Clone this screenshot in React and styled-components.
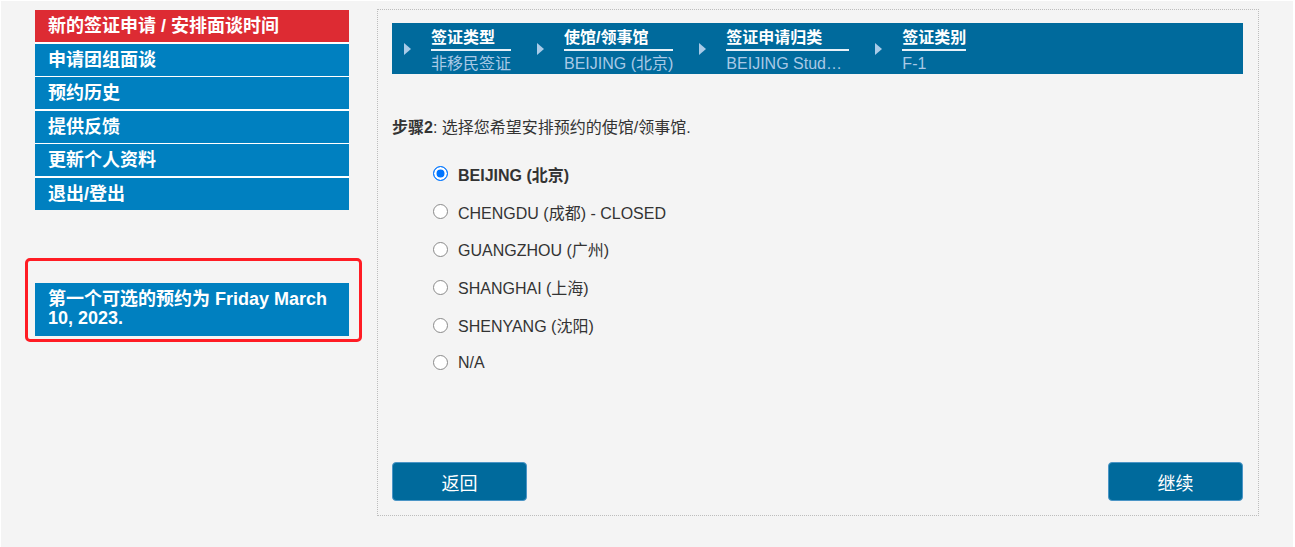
import React, { useState } from 'react';
import styled, { createGlobalStyle } from 'styled-components';

const GlobalStyle = createGlobalStyle`
  html, body {
    margin: 0;
    padding: 0;
    background: #ffffff;
  }
  body {
    font-family: "Liberation Sans", Arial, "Noto Sans CJK SC", sans-serif;
    color: #333333;
  }
  * { box-sizing: border-box; }
`;

const Page = styled.div`
  display: flex;
  align-items: flex-start;
  height: 546px;
  margin: 1px 2px 0 1px;
  padding: 8px 0 0 34px;
  background: #f4f4f4;
`;

const Sidebar = styled.div`
  width: 314px;
  flex-shrink: 0;
  padding-top: 1px;
`;

const Nav = styled.ul`
  list-style: none;
  margin: 0;
  padding: 0;
  background: #ffffff;
`;

const NavItem = styled.li`
  height: 32px;
  margin-top: ${props => props.$first ? '0' : '1.6px'};
  padding-left: 13px;
  line-height: 32px;
  font-size: 18px;
  font-weight: bold;
  color: #ffffff;
  white-space: nowrap;
  background: ${props => props.$active ? '#dd2b33' : '#0080c0'};
  cursor: pointer;
`;

const Highlight = styled.div`
  margin: 48px -13px 0 -10px;
  padding: 22px 10px 3px 7px;
  border: 3px solid #ff1c24;
  border-radius: 5px;
`;

const Notice = styled.div`
  padding: 7px 13px 8px;
  font-size: 18px;
  line-height: 19px;
  font-weight: bold;
  color: #ffffff;
  background: #0080c0;
`;

const Panel = styled.div`
  display: flex;
  flex-direction: column;
  width: 882px;
  height: 507px;
  margin-left: 28px;
  padding: 13px 15px 14px 14px;
  border: 1px dotted #bdbdbd;
`;

const StepBar = styled.div`
  display: flex;
  align-items: stretch;
  height: 51px;
  padding-left: 12px;
  background: #006a9c;
`;

const Step = styled.div`
  display: flex;
  align-items: center;
  margin-right: 26px;
`;

const Arrow = styled.span`
  width: 0;
  height: 0;
  margin-right: 20px;
  border-left: 7px solid #a9cbe8;
  border-top: 6px solid transparent;
  border-bottom: 6px solid transparent;
`;

const StepBody = styled.div`
  align-self: flex-start;
  width: ${props => props.$width ? `${props.$width}px` : 'auto'};
  padding-top: 6px;
  font-size: 16px;
`;

const StepTitle = styled.div`
  padding-bottom: 2px;
  line-height: 18px;
  border-bottom: 2px solid #e8f1f8;
  font-weight: bold;
  color: #ffffff;
  white-space: nowrap;
`;

const StepValue = styled.div`
  margin-top: 3px;
  line-height: 20px;
  color: #a9c9e6;
  white-space: nowrap;
`;

const Instruction = styled.p`
  margin: 44px 0 0;
  font-size: 16px;
  line-height: 20px;
  color: #333333;

  b { font-weight: bold; }
`;

const RadioList = styled.div`
  margin-top: 17px;
  padding-left: 41px;
`;

const RadioRow = styled.label`
  display: flex;
  align-items: center;
  height: 37.8px;
  font-size: 16px;
  font-weight: ${props => props.$checked ? 'bold' : 'normal'};
  color: #333333;
  cursor: pointer;
`;

const Radio = styled.input`
  appearance: none;
  width: 15px;
  height: 15px;
  margin: 0 10px 0 0;
  border-radius: 50%;
  border: 1px solid #8a8a8a;
  background: #ffffff;

  &:checked {
    border: 1.5px solid #0075ff;
    background: #0075ff;
    box-shadow: inset 0 0 0 2.5px #ffffff;
  }
`;

const Footer = styled.div`
  display: flex;
  justify-content: space-between;
  margin-top: auto;
`;

const Button = styled.button`
  width: 135px;
  height: 39px;
  border: 1px solid #4b95c6;
  border-radius: 4px;
  background: #006a9c;
  color: #ffffff;
  font-family: "Liberation Sans", "Noto Sans CJK SC", sans-serif;
  font-size: 18px;
  cursor: pointer;
`;

const menu = ['新的签证申请 / 安排面谈时间', '申请团组面谈', '预约历史', '提供反馈', '更新个人资料', '退出/登出'];

const steps = [
  { title: '签证类型', value: '非移民签证' },
  { title: '使馆/领事馆', value: 'BEIJING (北京)' },
  { title: '签证申请归类', value: 'BEIJING Stud…', width: 123 },
  { title: '签证类别', value: 'F-1' },
];

const posts = [
  'BEIJING (北京)',
  'CHENGDU (成都) - CLOSED',
  'GUANGZHOU (广州)',
  'SHANGHAI (上海)',
  'SHENYANG (沈阳)',
  'N/A',
];

export default function App() {
  const [post, setPost] = useState(0);

  return (
    <>
      <GlobalStyle />
      <Page>
        <Sidebar>
          <Nav>
            {menu.map((item, i) => (
              <NavItem key={item} $active={i === 0} $first={i === 0}>{item}</NavItem>
            ))}
          </Nav>
          <Highlight>
            <Notice>第一个可选的预约为 Friday March 10, 2023.</Notice>
          </Highlight>
        </Sidebar>

        <Panel>
          <StepBar>
            {steps.map(s => (
              <Step key={s.title}>
                <Arrow />
                <StepBody $width={s.width}>
                  <StepTitle>{s.title}</StepTitle>
                  <StepValue>{s.value}</StepValue>
                </StepBody>
              </Step>
            ))}
          </StepBar>

          <Instruction><b>步骤2</b>: 选择您希望安排预约的使馆/领事馆.</Instruction>

          <RadioList>
            {posts.map((p, i) => (
              <RadioRow key={p} $checked={i === post}>
                <Radio type="radio" name="post" checked={i === post} onChange={() => setPost(i)} />
                {p}
              </RadioRow>
            ))}
          </RadioList>

          <Footer>
            <Button>返回</Button>
            <Button>继续</Button>
          </Footer>
        </Panel>
      </Page>
    </>
  );
}
